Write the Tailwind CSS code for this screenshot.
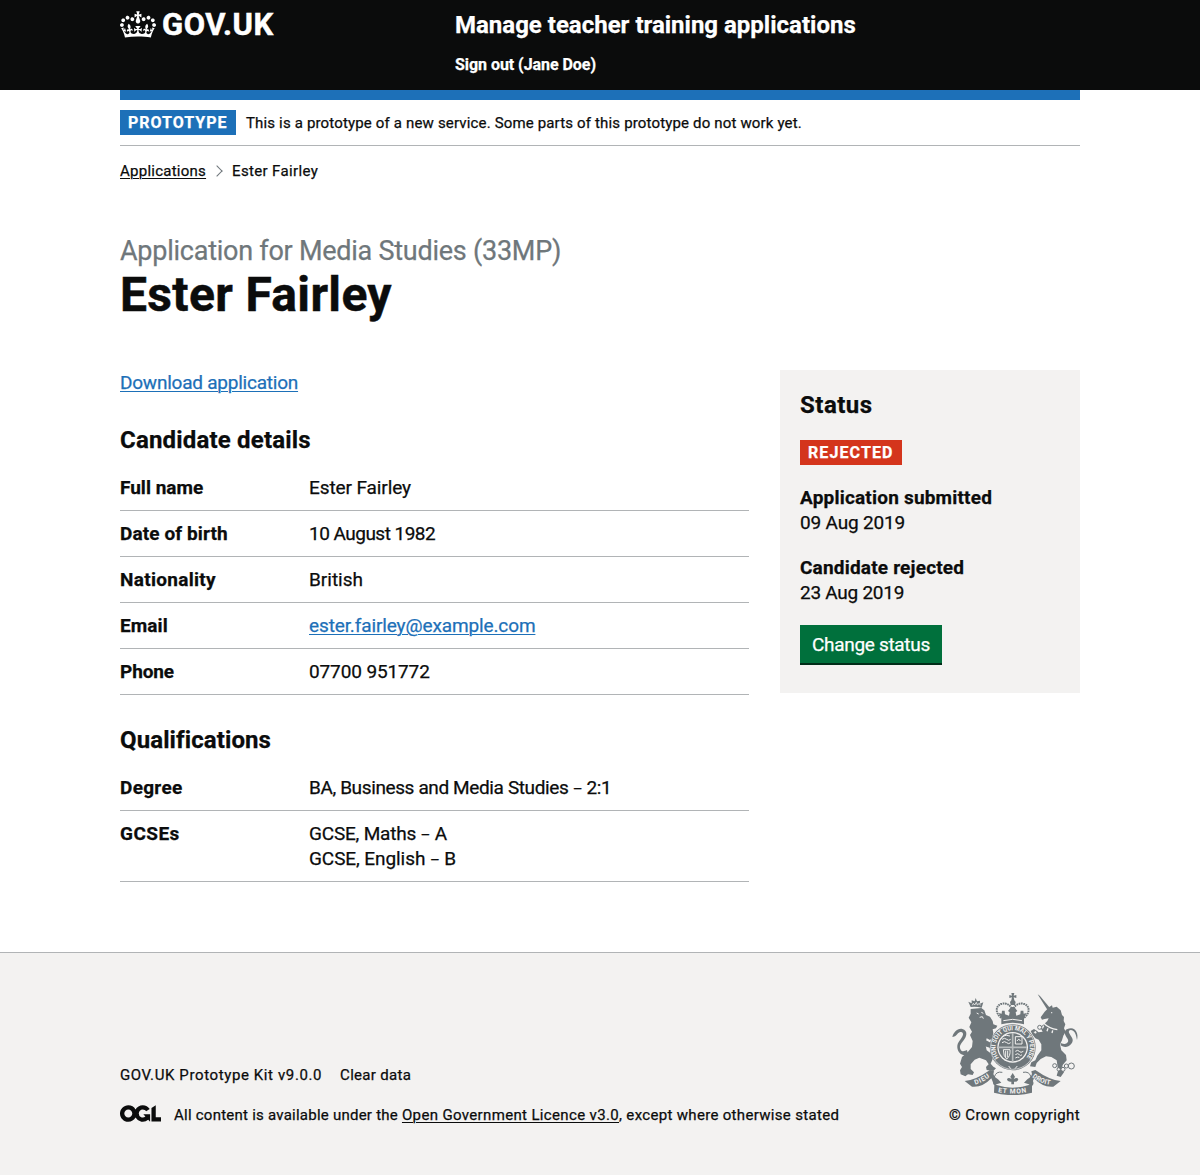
<!DOCTYPE html>
<html lang="en">
<head>
<meta charset="utf-8">
<title>Ester Fairley - Manage teacher training applications</title>
<script src="https://cdn.jsdelivr.net/npm/@tailwindcss/browser@4"></script>
</head>
<body class="bg-[#f3f2f1] font-['Roboto','Liberation_Sans',sans-serif] text-[19px] leading-[25px] text-[#0b0c0c] [-webkit-text-stroke:0.25px]">
<div class="bg-white">
<header class="h-[90px] bg-[#0b0c0c] text-white">
  <div class="mx-auto flex w-[960px] pt-[10px] font-bold">
    <a class="flex h-[30px] w-[335px] items-start gap-[6px] text-[31px] leading-[30px]">
      <svg class="mt-[1px] h-[27px] w-[36px]" viewBox="0 0 132 97" fill="currentColor"><path fill-rule="evenodd" d="M25 30.2c3.5 1.5 7.7-.2 9.1-3.7 1.5-3.6-.2-7.8-3.9-9.2-3.6-1.4-7.6.3-9.1 3.9-1.4 3.5.3 7.5 3.9 9zM9 39.5c3.6 1.5 7.8-.2 9.2-3.7 1.5-3.6-.2-7.8-3.9-9.1-3.6-1.5-7.6.2-9.1 3.8-1.4 3.5.3 7.5 3.8 9zM4.4 57.2c3.5 1.5 7.7-.2 9.1-3.8 1.5-3.6-.2-7.7-3.9-9.1-3.5-1.5-7.6.3-9.1 3.8-1.4 3.5.3 7.6 3.9 9.1zm38.3-21.4c3.5 1.5 7.7-.2 9.1-3.8 1.5-3.6-.2-7.7-3.9-9.1-3.6-1.5-7.6.3-9.1 3.8-1.3 3.6.4 7.7 3.9 9.1zm64.4-5.6c-3.6 1.5-7.8-.2-9.1-3.7-1.5-3.6.2-7.8 3.8-9.2 3.6-1.4 7.7.3 9.2 3.9 1.3 3.5-.4 7.5-3.9 9zm15.9 9.3c-3.6 1.5-7.7-.2-9.1-3.7-1.5-3.6.2-7.8 3.7-9.1 3.6-1.5 7.7.2 9.2 3.8 1.5 3.5-.3 7.5-3.8 9zm4.7 17.7c-3.6 1.5-7.8-.2-9.2-3.8-1.5-3.6.2-7.7 3.9-9.1 3.6-1.5 7.7.3 9.2 3.8 1.3 3.5-.4 7.6-3.9 9.1zM89.3 35.8c-3.6 1.5-7.8-.2-9.2-3.8-1.4-3.6.2-7.7 3.9-9.1 3.6-1.5 7.7.3 9.2 3.8 1.4 3.6-.3 7.7-3.9 9.1zM69.7 17.7l8.9 4.7V9.3l-8.9 2.8c-.2-.3-.5-.6-.9-.9L72.4 0H59.6l3.5 11.2c-.3.3-.6.5-.9.9l-8.8-2.8v13.1l8.8-4.7c.3.3.6.7.9.9l-5 15.4v.1c-.2.8-.4 1.6-.4 2.4 0 4.1 3.1 7.5 7 8.1h.2c.3 0 .7.1 1 .1.4 0 .7 0 1-.1h.2c4-.6 7.1-4.1 7.1-8.1 0-.8-.1-1.7-.4-2.4V34l-5.1-15.4c.4-.2.7-.6 1-.9zM66 92.8c16.9 0 32.8 1.1 47.1 3.2 4-16.9 8.9-26.7 14-33.5l-9.6-3.4c1 4.9 1.1 7.2 0 10.2-1.5-1.4-3-4.3-4.2-8.7L108.6 76c2.8-2 5-3.2 7.5-3.3-4.4 9.4-10 11.9-13.6 11.2-4.3-.8-6.3-4.6-5.6-7.9 1-4.7 5.7-5.9 8-.5 4.3-8.7-3-11.4-7.6-8.8 7.1-7.2 7.9-13.5 2.1-21.1-8 6.1-8.1 12.3-4.5 20.8-4.7-5.4-12.1-2.5-9.5 6.2 3.4-5.2 7.9-2 7.2 3.1-.6 4.3-6.4 7.8-13.5 7.2-10.3-.9-10.9-8-11.2-13.8 2.5-.5 7.1 1.8 11 7.3L80.2 60c-4.1 4.4-8 5.3-12.3 5.4 1.4-4.4 8-11.6 8-11.6H55.5s6.4 7.2 7.9 11.6c-4.2-.1-8-1-12.3-5.4l1.4 16.4c3.9-5.5 8.5-7.7 10.9-7.3-.3 5.8-.9 12.8-11.1 13.8-7.2.6-12.9-2.9-13.5-7.2-.7-5 3.8-8.3 7.1-3.1 2.7-8.7-4.6-11.6-9.4-6.2 3.7-8.5 3.6-14.7-4.6-20.8-5.8 7.6-5 13.9 2.2 21.1-4.7-2.6-11.9.1-7.7 8.8 2.3-5.5 7.1-4.2 8.1.5.7 3.3-1.3 7.1-5.7 7.9-3.5.7-9-1.8-13.5-11.2 2.5.1 4.7 1.3 7.5 3.3l-4.7-15.4c-1.2 4.4-2.7 7.2-4.3 8.7-1.1-3-.9-5.3 0-10.2l-9.5 3.4c5 6.9 9.9 16.7 14 33.5 14.8-2.1 30.8-3.2 47.7-3.2z"/></svg>
      <span class="tracking-[0.6px] [-webkit-text-stroke:0.5px]">GOV.UK</span>
    </a>
    <div class="flex flex-col items-start">
      <a class="text-2xl leading-[30px]">Manage teacher training applications</a>
      <a class="mt-[15px] text-base leading-5 tracking-[-0.05px]">Sign out (Jane Doe)</a>
    </div>
  </div>
</header>
<div class="mx-auto w-[960px]">
  <div class="h-[10px] bg-[#1d70b8]"></div>
  <div class="flex h-[46px] items-start gap-[10px] border-b border-[#b1b4b6] pt-[10px] text-base leading-5">
    <strong class="h-[25px] w-[116px] bg-[#1d70b8] px-2 pt-[3px] tracking-[1px] text-white">PROTOTYPE</strong>
    <span class="pt-[3px] text-[15px] tracking-[0.16px]">This is a prototype of a new service. Some parts of this prototype do not work yet.</span>
  </div>
  <nav class="flex items-center pt-[15px] text-[15px] leading-5 tracking-[0.25px]">
    <a class="underline decoration-1 underline-offset-2">Applications</a>
    <span class="mr-[12px] ml-[7px] size-[8px] rotate-45 border-t border-r border-[#6f777b]"></span>
    <span class="-ml-px tracking-[0.35px]">Ester Fairley</span>
  </nav>
  <main class="pt-[55px]">
    <div class="text-[27px] leading-[30px] tracking-[-0.25px] text-[#6f777b]">Application for Media Studies (33MP)</div>
    <h1 class="mt-[4px] text-5xl leading-[50px] font-bold tracking-[0.35px] [-webkit-text-stroke:0.5px]">Ester Fairley</h1>
    <div class="mt-[50px] flex items-start justify-between">
      <div class="w-[629px]">
        <a class="tracking-[-0.23px] text-[#1d70b8] underline decoration-1 underline-offset-2">Download application</a>
        <h2 class="mt-[30px] text-2xl leading-[30px] font-bold tracking-[0.18px]">Candidate details</h2>
        <dl class="mt-[10px]">
          <div class="flex border-b border-[#b1b4b6] py-[10px]"><dt class="w-[189px] font-bold">Full name</dt><dd class="tracking-[-0.1px]">Ester Fairley</dd></div>
          <div class="flex border-b border-[#b1b4b6] py-[10px]"><dt class="w-[189px] font-bold tracking-[0.1px]">Date of birth</dt><dd class="tracking-[-0.52px]">10 August 1982</dd></div>
          <div class="flex border-b border-[#b1b4b6] py-[10px]"><dt class="w-[189px] font-bold tracking-[0.3px]">Nationality</dt><dd>British</dd></div>
          <div class="flex border-b border-[#b1b4b6] py-[10px]"><dt class="w-[189px] font-bold tracking-[0.1px]">Email</dt><dd><a class="tracking-[-0.12px] text-[#1d70b8] underline decoration-1 underline-offset-2">ester.fairley@example.com</a></dd></div>
          <div class="flex border-b border-[#b1b4b6] py-[10px]"><dt class="w-[189px] font-bold tracking-[-0.1px]">Phone</dt><dd class="tracking-[-0.12px]">07700 951772</dd></div>
        </dl>
        <h2 class="mt-[30px] text-2xl leading-[30px] font-bold tracking-[0.1px]">Qualifications</h2>
        <dl class="mt-[10px]">
          <div class="flex border-b border-[#b1b4b6] py-[10px]"><dt class="w-[189px] font-bold tracking-[0.3px]">Degree</dt><dd class="tracking-[-0.38px]">BA, Business and Media Studies <span class="text-[15px] leading-none">–</span> 2:1</dd></div>
          <div class="flex border-b border-[#b1b4b6] py-[10px]"><dt class="w-[189px] font-bold tracking-[0.45px]">GCSEs</dt><dd><div class="tracking-[-0.2px]">GCSE, Maths <span class="text-[15px] leading-none">–</span> A</div><div class="tracking-[-0.08px]">GCSE, English <span class="text-[15px] leading-none">–</span> B</div></dd></div>
        </dl>
      </div>
      <aside class="h-[323px] w-[300px] bg-[#f3f2f1] p-5">
        <h2 class="text-2xl leading-[30px] font-bold tracking-[0.5px]">Status</h2>
        <strong class="mt-5 block h-[25px] w-[102px] bg-[#d4351c] px-2 pt-[3px] text-base leading-5 tracking-[1.1px] text-white">REJECTED</strong>
        <div class="mt-5"><b class="tracking-[0.2px]">Application submitted</b><br><span class="tracking-[-0.18px]">09 Aug 2019</span></div>
        <div class="mt-5"><b class="tracking-[0.19px]">Candidate rejected</b><br><span class="tracking-[-0.26px]">23 Aug 2019</span></div>
        <button class="mt-5 block h-[38px] w-[142px] bg-[#00703c] pl-3 text-left tracking-[-0.31px] whitespace-nowrap text-white shadow-[0_2px_0_#002d18]">Change status</button>
      </aside>
    </div>
  </main>
</div>
<div class="h-[70px]"></div>
</div>
<footer class="h-[223px] border-t border-[#b1b4b6] bg-[#f3f2f1] text-[15px] leading-5">
  <div class="mx-auto flex w-[960px] justify-between pt-[32px]">
    <div class="flex flex-col pt-[80px]">
      <div class="flex gap-[18px]"><span class="tracking-[0.61px]">GOV.UK Prototype Kit v9.0.0</span><span class="tracking-[0.3px]">Clear data</span></div>
      <div class="mt-5 flex items-start">
        <svg class="mr-[13px] h-[17px] w-[41px]" viewBox="0 0 483.2 195.7" fill="currentColor"><path d="M421.5 142.8V.1l-50.7 32.3v161.1h112.4v-50.7zm-122.3-9.6A47.12 47.12 0 0 1 221 97.8c0-26 21.1-47.1 47.1-47.1 16.7 0 31.4 8.7 39.7 21.8l42.7-27.2A97.63 97.63 0 0 0 268.1 0c-36.5 0-68.3 20.1-85.1 49.7A98 98 0 0 0 97.8 0C43.9 0 0 43.9 0 97.8s43.9 97.8 97.8 97.8c36.5 0 68.3-20.1 85.1-49.7a97.76 97.76 0 0 0 149.6 25.4l19.4 22.2h3v-87.8h-80l24.3 27.5zM97.8 145c-26 0-47.1-21.1-47.1-47.1s21.1-47.1 47.1-47.1 47.1 21.1 47.1 47.1S123.8 145 97.8 145"/></svg>
        <span class="whitespace-pre"><span class="tracking-[0.24px]">All content is available under the </span><a class="tracking-[0.35px] underline decoration-1 underline-offset-2">Open Government Licence v3.0</a><span class="tracking-[0.32px]">, except where otherwise stated</span></span>
      </div>
    </div>
    <div class="flex w-[140px] flex-col items-end">
      <svg class="-mr-[5px] h-[110px] w-[145px] shrink-0" viewBox="0 0 435 330" fill="#6f777b">
        <!-- lion and its crown -->
        <path d="M92 66l-7-16 10 5 0-9 9 3 3-10 4 10 9-2 0 9 10-4-5 16q-17-4-33-2z"/>
        <path d="M97 61l3-6 4 5 5-8 3 8 6-5 3 6" fill="none" stroke="#f3f2f1" stroke-width="2.5"/>
        <path d="M92 72L124 69 133 76 138 90 150 95 158 108 160 118 172 122 168 130 158 133 160 145 156 160 150 165 140 160 136 178 140 196 152 205 158 222 152 236 160 245 168 250 160 258 140 255 138 246 146 238 138 226 118 218 104 224 92 238 92 252 102 262 98 270 84 268 76 274 62 268 60 256 66 246 60 236 66 216 84 200 96 186 98 168 90 150 96 140 88 126 94 112 86 98 92 86Z"/>
        <path d="M132 163l26 13-4 14-24-8z"/>
        <path d="M110 84l6 3M124 82l6 3M119 97l8-2 3 6" fill="none" stroke="#f3f2f1" stroke-width="3"/>
        <path d="M84 208c-16 6-30-3-32-20-2-18 14-26 17-39 1-10-8-10-15-4-8 8-7 10-17 11 4-14 15-27 30-24 18 5 13 23 4 34-10 13-14 18-9 28 4 7 11 5 19 1z"/>
        <!-- crown above the shield -->
        <path d="M214 24h9l-2 8 8-2v9l-8-2 2 9 4 5-2 9h-13l-2-9 4-5 2-9-8 2v-9l8 2z"/>
        <g fill="none" stroke="#6f777b" stroke-width="6" stroke-dasharray="5 2"><path d="M184 98c-20-14-17-38 2-42 12-3 22 3 28 12M252 98c20-14 17-38-2-42-12-3-22 3-28 12"/></g>
        <path d="M184 98l-8-14 9 2 1-9 8 0 1 11 12 4 2-10-5-4 9-12h10l9 12-5 4 2 10 12-4 1-11 8 0 1 9 9-2-8 14 0 20q-34-9-68 0z"/>
        <path d="M190 107q28-8 56 0" fill="none" stroke="#f3f2f1" stroke-width="3"/>
        <!-- garter and quartered shield -->
        <circle cx="218" cy="187" r="69"/>
        <circle cx="218" cy="187" r="46" fill="#f3f2f1"/>
        <circle cx="218" cy="187" r="66" fill="none" stroke="#f3f2f1" stroke-width="2"/>
        <circle cx="218" cy="187" r="42"/>
        <path d="M218 144v86M175 187h86" stroke="#b9bdbe" stroke-width="5"/>
        <g fill="none" stroke="#f3f2f1" stroke-width="3"><path d="M186 163q8-6 14 0t12 0M186 173q8-6 14 0t12 0M190 153q8-4 20 0M226 155h20v22h-20zM231 168q6-10 10 0M190 194h20q2 20-10 28-10-8-10-28zM197 197v20M203 197v20M226 199q8-6 12 0t12 0M226 209q8-6 12 0t8 0M226 219q6-4 12-2"/></g>
        <path id="garter" d="M177 218A51.500 51.500 0 1 1 259 218" fill="none"/>
        <text font-family="Roboto" font-size="19" font-weight="700" fill="#f3f2f1"><textPath href="#garter" textLength="228" lengthAdjust="spacingAndGlyphs">HONI SOIT QUI MAL Y PENSE</textPath></text>
        <path d="M206 243l6 8M225 251l7-8" stroke="#f3f2f1" stroke-width="3"/>
        <!-- unicorn -->
        <path d="M293 28l7 5 30 36-8 5z"/>
        <path d="M328 66L336 61 338 68 350 65 362 76 366 90 372 96 371 108 376 118 372 130 377 140 370 152 366 166 360 178 364 196 378 210 380 226 368 240 366 252 372 262 362 276 350 272 354 258 352 240 350 226 334 216 318 214 302 222 290 234 286 246 270 244 274 232 286 226 292 212 304 196 304 178 296 164 286 160 278 150 272 138 282 132 296 142 308 140 300 126 312 118 322 108 326 100 314 102 306 104 302 97 314 80Z"/>
        <circle cx="335" cy="83" r="2" fill="#f3f2f1"/>
        <path d="M308 112q20 20 44 22M311 122l-4 8M324 130l-3 9M338 136l-2 8" stroke="#f3f2f1" stroke-width="4" fill="none"/>
        <path d="M362 181c12 8 22 6 32-5 11-13-2-22-7-33-3-9 7-10 13-5 7 6 8 12 11 27 5-18-3-34-18-35-17 0-22 11-16 22 6 10 10 14 6 20-5 7-11 6-21 2z"/>
        <g fill="#f3f2f1" stroke="#6f777b" stroke-width="3"><circle cx="299" cy="127" r="6"/><circle cx="286" cy="142" r="5"/><circle cx="344" cy="242" r="6"/><circle cx="356" cy="253" r="5"/><circle cx="369" cy="253" r="6"/><circle cx="379" cy="243" r="6"/><circle cx="394" cy="243" r="9"/></g>
        <!-- motto ribbon -->
        <path d="M74 288q32-2 76-33l12 4q-6 14 12 24l10 10-22 7-8-20q-26 28-58 25z"/>
        <path d="M362 288q-32-2-76-33l-12 4q6 14-12 24l-10 10 22 7 8-20q26 28 58 25z"/>
        <path d="M163 281q-6 12 7 19 48 16 96 0 13-7 7-19l6 8q4 8-3 14v20q-58 15-114 0l1-22q-8-8 0-20z"/>
        <path d="M163 276q5-18 24-14M273 276q-5-18-24-14" fill="none" stroke="#6f777b" stroke-width="3"/>
        <path d="M188 264l60 0-8 30-44 0z" fill="#f3f2f1"/>
        <path d="M218 264l7 11-4 8q10-8 14 0-1 8-13 7v8h-8v-8q-12 1-13-7 4-8 14 0l-4-8z"/>
        <g font-family="Roboto" font-weight="700" font-size="20" fill="#f3f2f1">
          <path id="left" d="M106 299q24-7 48-27" fill="none"/><text><textPath href="#left" textLength="50">DIEU</textPath></text>
          <path id="mid" d="M174 321q44 9 90 0" fill="none"/><text><textPath href="#mid" textLength="86">ET MON</textPath></text>
          <path id="right" d="M276 276q24 20 60 24" fill="none"/><text><textPath href="#right" textLength="60">DROIT</textPath></text>
        </g>
      </svg>
      <div class="mt-[10px] tracking-[0.4px] whitespace-nowrap">© Crown copyright</div>
    </div>
  </div>
</footer>
</body>
</html>
